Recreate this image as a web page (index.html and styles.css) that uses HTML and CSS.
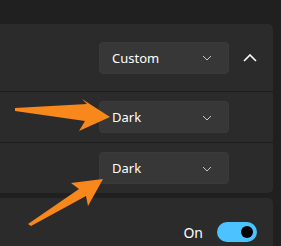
FILE: index.html
```html
<!DOCTYPE html>
<html lang="en">
<head>
<meta charset="UTF-8">
<meta name="viewport" content="width=device-width, initial-scale=1.0">
<title>Colors</title>
<link rel="stylesheet" href="styles.css">
</head>
<body>

<div class="page">
  <div class="card">
    <div class="row header">
      <div class="dropdown">
        <span>Custom</span>
        <svg class="chev" width="10" height="6" viewBox="0 0 10 6"><path d="M1 1 L5 5 L9 1" fill="none" stroke="#c8c8c8" stroke-width="1"/></svg>
      </div>
      <svg class="expander" width="14" height="8" viewBox="0 0 14 8"><path d="M1 7 L7 1 L13 7" fill="none" stroke="#ffffff" stroke-width="1.6"/></svg>
    </div>
    <div class="row sub">
      <div class="dropdown">
        <span>Dark</span>
        <svg class="chev" width="10" height="6" viewBox="0 0 10 6"><path d="M1 1 L5 5 L9 1" fill="none" stroke="#c8c8c8" stroke-width="1"/></svg>
      </div>
    </div>
    <div class="row sub">
      <div class="dropdown">
        <span>Dark</span>
        <svg class="chev" width="10" height="6" viewBox="0 0 10 6"><path d="M1 1 L5 5 L9 1" fill="none" stroke="#c8c8c8" stroke-width="1"/></svg>
      </div>
    </div>
  </div>

  <div class="card second">
    <div class="row toggle-row">
      <span class="state">On</span>
      <div class="toggle"><div class="knob"></div></div>
    </div>
  </div>
</div>

<svg class="arrows" width="281" height="246" viewBox="0 0 281 246">
  <polygon points="15,108 87,104 82,99 110,117 79,131 85,121 15,111" fill="#f8881b"/>
  <polygon points="28,224 79,189 71,183 103,179 88,206 86,196 31,226" fill="#f8881b"/>
</svg>

</body>
</html>
```

FILE: styles.css
```css
body {
  margin: 0;
  background: #202020;
  font-family: "Noto Sans", "Open Sans", sans-serif;
  font-size: 13px;
  color: #ffffff;
  overflow: hidden;
}
.page {
  padding-top: 24px;
}
.card {
  width: 273px;
  background: #2b2b2b;
  border-radius: 0 5px 5px 0;
}
.second {
  margin-top: 5px;
}
.row {
  display: flex;
  align-items: center;
  justify-content: flex-end;
}
.header {
  height: 67px;
  padding-right: 16px;
  gap: 14px;
  border-bottom: 1px solid #1d1d1d;
}
.sub {
  height: 50px;
  padding-right: 44px;
}
.sub + .sub {
  border-top: 1px solid #1d1d1d;
}
.dropdown {
  box-sizing: border-box;
  width: 130px;
  height: 32px;
  padding: 0 16px 0 12px;
  display: flex;
  align-items: center;
  justify-content: space-between;
  background: #373737;
  border: 1px solid #3a3a3a;
  border-radius: 4px;
}
.chev {
  margin-top: 1px;
}
.toggle-row {
  height: 68px;
  padding-right: 16px;
  gap: 14px;
}
.state {
  font-size: 14px;
}
.toggle {
  width: 40px;
  height: 20px;
  border-radius: 10px;
  background: #4cc2ff;
  display: flex;
  align-items: center;
  justify-content: flex-end;
  padding-right: 4px;
  box-sizing: border-box;
}
.knob {
  width: 12px;
  height: 12px;
  border-radius: 50%;
  background: #000000;
}
.arrows {
  position: absolute;
  left: 0;
  top: 0;
}
```
